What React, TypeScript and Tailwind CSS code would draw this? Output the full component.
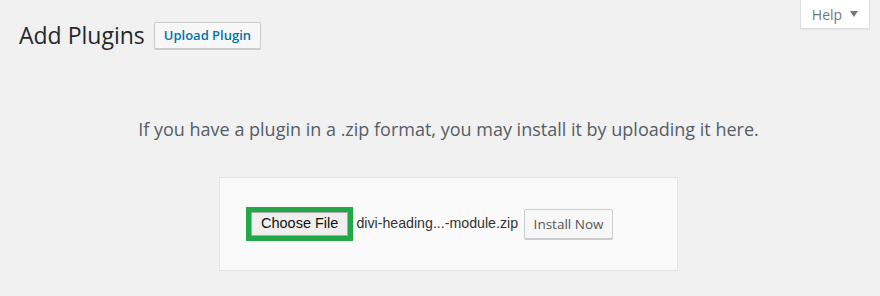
export default function App() {
  return (
    <div className="relative w-[880px] h-[296px] bg-[#f1f1f1] overflow-hidden" style={{ fontFamily: '"Open Sans", "Noto Sans", sans-serif' }}>
      <div className="absolute top-0 left-[800px] w-[70px] h-[29px] bg-white border border-t-0 border-[#dddddd] shadow-[0_1px_1px_rgba(0,0,0,0.04)] flex items-center justify-center gap-[8px] text-[14px] text-[#72777c]">
        <span>Help</span>
        <svg width="8" height="6" viewBox="0 0 8 6"><path d="M0 0 L8 0 L4 6 Z" fill="#72777c" /></svg>
      </div>
      <div className="flex items-center pl-[19px] pt-[21px] gap-[9px]">
        <h1 className="text-[23px] leading-[29px] text-[#23282d] font-normal">Add Plugins</h1>
        <button className="h-[27px] px-[9px] bg-[#f7f7f7] border border-[#cccccc] rounded-[2px] text-[13px] font-semibold text-[#0073aa] shadow-[0_1px_0_#cccccc]">Upload Plugin</button>
      </div>
      <div className="ml-[20px] w-[857px] flex flex-col items-center">
        <p className="mt-[67px] text-[18px] leading-[24px] text-[#555d66]">If you have a plugin in a .zip format, you may install it by uploading it here.</p>
        <div className="mt-[36px] w-[459px] h-[94px] bg-[#fafafa] border border-[#e5e5e5] flex items-center pl-[26px]">
          <div className="border-[5px] border-[#22a846] flex">
            <div className="h-[24px] px-[9px] bg-[#efefef] border border-[#a9a9a9] flex items-center text-[14.5px] text-[#111]" style={{ fontFamily: '"Liberation Sans", Arial, sans-serif' }}>Choose File</div>
          </div>
          <span className="ml-[3px] text-[14.2px] text-[#333]" style={{ fontFamily: '"Liberation Sans", Arial, sans-serif' }}>divi-heading...-module.zip</span>
          <button className="ml-[6px] h-[30px] w-[89px] bg-[#f7f7f7] border border-[#cccccc] rounded-[2px] text-[13.5px] text-[#555555] shadow-[0_1px_0_#cccccc]">Install Now</button>
        </div>
      </div>
    </div>
  );
}
